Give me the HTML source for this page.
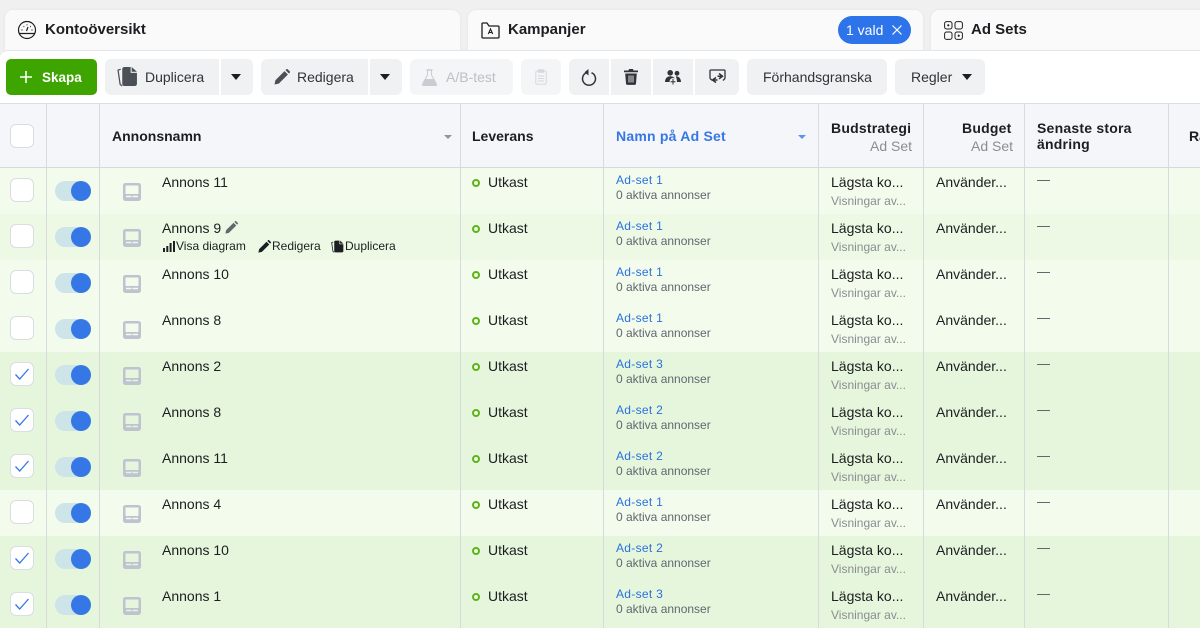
<!DOCTYPE html>
<html lang="sv"><head><meta charset="utf-8"><title>Annonser</title>
<style>
*{box-sizing:border-box}
html,body{margin:0;padding:0}
body{width:1200px;height:628px;overflow:hidden;position:relative;background:#f0f0f0;font-family:"Liberation Sans",Arial,sans-serif;color:#1c1e21;font-size:14px}
.a,.r>*,.tab,.btn{position:absolute}
.tab{top:10px;height:41px;background:#fafafa;border-radius:8px 8px 0 0;box-shadow:0 0 3px rgba(0,0,0,.06)}
.tt{position:absolute;top:11px;font-weight:700;font-size:15px;line-height:18px;color:#1c1e21;white-space:nowrap}
#bar{position:absolute;left:0;top:50px;width:1200px;height:54px;background:#fff;border-top:1px solid #e4e5e7;border-bottom:1px solid #dadde1;border-radius:8px 0 0 0}
.btn{top:59px;height:36px;background:#f0f1f2;border-radius:6px;line-height:36px;white-space:nowrap;color:#303338}
.btn span{position:absolute;top:0}
.lft{border-radius:6px 0 0 6px}.rgt{border-radius:0 6px 6px 0}.mid{border-radius:0}
.car{position:absolute;width:0;height:0;border-left:5.5px solid transparent;border-right:5.5px solid transparent;border-top:6.5px solid #1c1e21}
#head{position:absolute;left:0;top:104px;width:1200px;height:64px;background:#f5f6f9;border-bottom:1.5px solid #d6d8db}
.h{position:absolute;font-weight:700;font-size:14px;line-height:16px;white-space:nowrap;color:#1c1e21}
.ls{letter-spacing:.22px}
.sub{position:absolute;font-size:14px;line-height:16px;color:#8a8d91;white-space:nowrap}
.v{position:absolute;top:104px;width:1px;height:524px;background:#d8dadd;z-index:5}
.r{position:absolute;left:0;width:1200px;height:46px;background:#f3fbec}
.r.e{background:#edf9e5}.r.s{background:#e6f6dc}
.cb{left:10px;top:10px;width:24px;height:24px;background:#fff;border:1px solid #dadde1;border-radius:6px}
.cb svg{position:absolute;left:3px;top:3px}
.tr{left:55px;top:13px;width:34px;height:20px;border-radius:10px;background:#cde4e9}
.kn{left:71px;top:13px;width:20px;height:20px;border-radius:50%;background:#3578e5}
.ic{left:123px;top:15px}
.n{left:162px;top:6px;line-height:16px;white-space:nowrap}
.d{left:472px;top:11px;width:8px;height:8px;border-radius:50%;border:2.5px solid #5cb516;background:#f3fbec}
.u{left:488px;top:6px;line-height:16px}
.l{left:616px;top:4px;font-size:12px;line-height:16px;color:#2871e0;letter-spacing:.3px;white-space:nowrap}
.m{left:616px;top:19px;font-size:12px;line-height:16px;color:#606770;white-space:nowrap}
.b1{left:831px;top:6px;line-height:16px;white-space:nowrap}
.b2{left:831px;top:25px;font-size:12px;line-height:16px;color:#8a8d91;white-space:nowrap}
.p{left:936px;top:6px;line-height:16px;white-space:nowrap}
.dash{left:1037px;top:12px;width:13px;height:1px;background:#606770}
.act{font-size:12px;line-height:14px;top:25px;white-space:nowrap;color:#1c1e21}
</style></head><body>
<svg width="0" height="0" style="position:absolute">
<symbol id="ad" viewBox="0 0 18 18"><path fill-rule="evenodd" fill="#bec3cf" d="M2.500 0h13A2.500 2.500 0 0 1 18 2.500v13a2.500 2.500 0 0 1-2.500 2.500h-13A2.500 2.500 0 0 1 0 15.500v-13A2.500 2.500 0 0 1 2.500 0zM2.500 2.500V11h13V2.500zM3 12.700v1.600h5.500v-1.600zM9.500 12.700v1.600H15v-1.600z"/></symbol>
<symbol id="ck" viewBox="0 0 16 16"><path d="M1.500 8.500 5.700 13 14.500 3" fill="none" stroke="#3578e5" stroke-width="1.300"/></symbol>
<symbol id="pen" viewBox="0 0 16 16"><path d="M.5 15.500l.9-4.300L10.500 2.100l3.400 3.400-9.100 9.100zM11.500 1.100l.8-.8a1 1 0 0 1 1.400 0l2 2a1 1 0 0 1 0 1.400l-.8.800z" fill="currentColor"/></symbol>
<symbol id="dup" viewBox="0 0 20 20"><path d="M7 1h6v5.500h6V17a2 2 0 0 1-2 2H7a2 2 0 0 1-2-2V3a2 2 0 0 1 2-2zM14 1l5 4.500h-5z" fill="currentColor"/><path d="M3.500 3 1 4l2 13.500 2 1.500" fill="none" stroke="currentColor" stroke-width="1.200"/></symbol>
</svg>

<div class="tab" style="left:5px;width:455px">
<svg class="a" style="left:12px;top:10px" width="20" height="20" viewBox="0 0 20 20" fill="none" stroke="#1c1e21" stroke-width="1.200"><circle cx="10" cy="10" r="8.500"/><path d="M2.500 13.500h15M9.500 11l1.500-4"/><path d="M4.500 10h1M14.500 10h1M6.500 6.500h.8M10 4.500v.8M13.200 6.500h.8" stroke-width="1.300"/></svg>
<div class="tt" style="left:40px">Kontoöversikt</div></div>
<div class="tab" style="left:468px;width:455px">
<svg class="a" style="left:13px;top:12px" width="19" height="17" viewBox="0 0 19 17" fill="none" stroke="#1c1e21" stroke-width="1.300"><path d="M1 15V2a1 1 0 0 1 1-1h4l2 3h9a1 1 0 0 1 1 1v10a1 1 0 0 1-1 1H2a1 1 0 0 1-1-1z"/><path d="M7.300 12l2.200-5 2.200 5M8.200 10.500h2.600" stroke-width="1.100"/></svg>
<div class="tt" style="left:40px">Kampanjer</div>
<div class="a" style="left:370px;top:6px;width:73px;height:28px;border-radius:14px;background:#2d73ea;color:#fff;line-height:28px;padding-left:8px">1 vald
<svg class="a" style="left:54px;top:9px" width="10" height="10" viewBox="0 0 10 10"><path d="M.5.500l9 9M9.500.500l-9 9" stroke="#fff" stroke-width="1.200"/></svg></div></div>
<div class="tab" style="left:931px;width:269px;border-radius:8px 0 0 0">
<svg class="a" style="left:13px;top:11px" width="19" height="19" viewBox="0 0 19 19" fill="none" stroke="#1c1e21" stroke-width="1"><rect x=".6" y=".6" width="7.400" height="7.400" rx="2"/><rect x="11" y=".6" width="7.400" height="7.400" rx="2"/><rect x=".6" y="11" width="7.400" height="7.400" rx="2"/><rect x="11" y="11" width="7.400" height="7.400" rx="2"/><circle cx="4.300" cy="4.300" r=".6" fill="#1c1e21"/><circle cx="14.700" cy="14.700" r=".6" fill="#1c1e21"/></svg>
<div class="tt" style="left:40px">Ad Sets</div></div>

<div id="bar"></div>
<div class="btn" style="left:6px;width:91px;background:#3ea400;color:#fff;font-weight:700;font-size:13.500px;border-radius:5px">
<svg class="a" style="left:14px;top:12px" width="12" height="12" viewBox="0 0 12 12"><path d="M6 0v12M0 6h12" stroke="#fff" stroke-width="1.600"/></svg><span style="left:36px;top:1px">Skapa</span></div>
<div class="btn lft" style="left:105px;width:114px"><svg class="a" style="left:12px;top:7px;color:#4b4f56" width="21" height="21"><use href="#dup"/></svg><span style="left:40px">Duplicera</span></div>
<div class="btn rgt" style="left:221px;width:32px"><i class="car" style="left:10px;top:15px"></i></div>
<div class="btn lft" style="left:261px;width:107px"><svg class="a" style="left:13px;top:10px;color:#4b4f56" width="16" height="16"><use href="#pen"/></svg><span style="left:36px">Redigera</span></div>
<div class="btn rgt" style="left:370px;width:32px"><i class="car" style="left:10px;top:15px"></i></div>
<div class="btn" style="left:410px;width:103px;background:#f4f5f6;color:#bcc0c4"><svg class="a" style="left:12px;top:10px" width="15" height="17" viewBox="0 0 15 17"><path d="M5.500 1h4v5l5 9a1 1 0 0 1-1 1.500H1.500a1 1 0 0 1-1-1.500l5-9z" fill="none" stroke="#c9ccd1" stroke-width="1"/><path d="M3.500 10h8l3 6H.8z" fill="#c9ccd1"/><path d="M4.500 1h6" stroke="#c9ccd1" stroke-width="1.500"/></svg><span style="left:36px">A/B-test</span></div>
<div class="btn" style="left:521px;width:40px;background:#f4f5f6"><svg class="a" style="left:14px;top:10px" width="12" height="16" viewBox="0 0 12 16" fill="none" stroke="#d5d8dc"><rect x=".8" y="2" width="10.400" height="13.200" rx="1.500"/><rect x="3.500" y=".8" width="5" height="2.500" fill="#d5d8dc"/><path d="M3 7h6M3 9.500h6M3 12h6"/></svg></div>
<div class="btn lft" style="left:569px;width:40px"><svg class="a" style="left:12px;top:10px" width="16" height="17" viewBox="0 0 16 17" fill="none" stroke="#303338" stroke-width="1.500"><path d="M5.500 3.700a6.500 6.500 0 1 0 5 0"/><path d="M7.500 0v6.500L3.500 3.200z" fill="#303338" stroke="none"/></svg></div>
<div class="btn mid" style="left:611px;width:40px"><svg class="a" style="left:13px;top:10px" width="14" height="16" viewBox="0 0 14 16"><path d="M5 0h4l.5 1.500H14V3.300H0V1.500h4.500z M1.200 4.500h11.600L12 14.500a1.500 1.500 0 0 1-1.500 1.400h-7A1.500 1.500 0 0 1 2 14.500z" fill="#303338"/><path d="M5 6.500v7M7 6.500v7M9 6.500v7" stroke="#f0f1f2" stroke-width=".9"/></svg></div>
<div class="btn mid" style="left:653px;width:40px"><svg class="a" style="left:12px;top:11px" width="16" height="15" viewBox="0 0 16 15" fill="#303338"><circle cx="5.200" cy="2.800" r="2.800"/><circle cx="12" cy="3.300" r="2.400"/><path d="M0 12C0 8.500 2.300 6.300 5.300 6.300S11 8.500 11 12zM10.800 6.300c3 0 5.200 2.200 5.200 5.700h-4c0-2-.5-4-1.200-5.700z"/><circle cx="8" cy="11.500" r="3.500" fill="#f0f1f2"/><path d="M8 9v5.500M5.500 11.700h5" stroke="#303338" stroke-width="1"/></svg></div>
<div class="btn rgt" style="left:695px;width:44px"><svg class="a" style="left:14px;top:10px" width="17" height="16" viewBox="0 0 17 16" fill="none" stroke="#303338" stroke-width="1.300"><path d="M1 9.500V2a1 1 0 0 1 1-1h13a1 1 0 0 1 1 1v7.500M1 9.500l2.500 2M16 9.500l-2 2"/><path d="M7 8.500l-3.500 2.500L7 13.500M3.500 11H8.500M10 4.500l3.500 2.700-3.500 2.700M13.500 7.200H8.500" stroke-width="1.500"/></svg></div>
<div class="btn" style="left:747px;width:140px"><span style="left:16px">Förhandsgranska</span></div>
<div class="btn" style="left:895px;width:90px"><span style="left:16px">Regler</span><i class="car" style="left:67px;top:15px"></i></div>

<div id="head">
<div class="a cb" style="position:absolute;left:10px;top:20px;width:24px;height:24px;background:#fff;border:1px solid #dadde1;border-radius:6px"></div>
<div class="h" style="left:112px;top:24px">Annonsnamn</div>
<i class="a" style="left:444px;top:31px;border-left:4px solid transparent;border-right:4px solid transparent;border-top:4px solid #90949c"></i>
<div class="h" style="left:472px;top:24px">Leverans</div>
<div class="h ls" style="left:616px;top:24px;color:#3578e5">Namn på Ad Set</div>
<i class="a" style="left:798px;top:31px;border-left:4px solid transparent;border-right:4px solid transparent;border-top:4px solid #5b93ee"></i>
<div class="h ls" style="left:831px;top:16px">Budstrategi</div><div class="sub" style="left:870px;top:34px">Ad Set</div>
<div class="h ls" style="left:962px;top:16px">Budget</div><div class="sub" style="left:971px;top:34px">Ad Set</div>
<div class="h ls" style="left:1037px;top:16px">Senaste stora<br>ändring</div>
<div class="h" style="left:1189px;top:24px">Räckvidd</div>
</div>
<div class="v" style="left:46px"></div><div class="v" style="left:99px;"></div><div class="v" style="left:460px"></div><div class="v" style="left:603px"></div><div class="v" style="left:818px"></div><div class="v" style="left:923px"></div><div class="v" style="left:1024px"></div><div class="v" style="left:1168px"></div>

<div class="r" style="top:168px"><div class="cb"></div><div class="tr"></div><div class="kn"></div><svg class="ic" width="18" height="18"><use href="#ad"/></svg><div class="n">Annons 11</div><div class="d"></div><div class="u">Utkast</div><div class="l">Ad-set 1</div><div class="m">0 aktiva annonser</div><div class="b1">Lägsta ko...</div><div class="b2">Visningar av...</div><div class="p">Använder...</div><div class="dash"></div></div>
<div class="r e" style="top:214px"><div class="cb"></div><div class="tr"></div><div class="kn"></div><svg class="ic" width="18" height="18"><use href="#ad"/></svg><div class="n">Annons 9</div>
<svg style="left:225px;top:7px;color:#65676b" width="13" height="13"><use href="#pen"/></svg>
<svg style="left:163px;top:27px" width="12" height="11" viewBox="0 0 12 11" fill="#1c1e21"><rect x="0" y="7" width="2" height="4"/><rect x="3.300" y="5" width="2" height="6"/><rect x="6.600" y="2" width="2" height="9"/><rect x="10" y="0" width="2" height="11"/></svg><div class="act" style="left:176px">Visa diagram</div>
<svg style="left:258px;top:26px;color:#1c1e21" width="13" height="13"><use href="#pen"/></svg><div class="act" style="left:272px">Redigera</div>
<svg style="left:331px;top:26px;color:#1c1e21" width="13" height="13"><use href="#dup"/></svg><div class="act" style="left:345px">Duplicera</div>
<div class="d" style="background:#edf9e5"></div><div class="u">Utkast</div><div class="l">Ad-set 1</div><div class="m">0 aktiva annonser</div><div class="b1">Lägsta ko...</div><div class="b2">Visningar av...</div><div class="p">Använder...</div><div class="dash"></div></div>
<div class="r" style="top:260px"><div class="cb"></div><div class="tr"></div><div class="kn"></div><svg class="ic" width="18" height="18"><use href="#ad"/></svg><div class="n">Annons 10</div><div class="d"></div><div class="u">Utkast</div><div class="l">Ad-set 1</div><div class="m">0 aktiva annonser</div><div class="b1">Lägsta ko...</div><div class="b2">Visningar av...</div><div class="p">Använder...</div><div class="dash"></div></div>
<div class="r" style="top:306px"><div class="cb"></div><div class="tr"></div><div class="kn"></div><svg class="ic" width="18" height="18"><use href="#ad"/></svg><div class="n">Annons 8</div><div class="d"></div><div class="u">Utkast</div><div class="l">Ad-set 1</div><div class="m">0 aktiva annonser</div><div class="b1">Lägsta ko...</div><div class="b2">Visningar av...</div><div class="p">Använder...</div><div class="dash"></div></div>
<div class="r s" style="top:352px"><div class="cb"><svg width="16" height="16"><use href="#ck"/></svg></div><div class="tr"></div><div class="kn"></div><svg class="ic" width="18" height="18"><use href="#ad"/></svg><div class="n">Annons 2</div><div class="d"></div><div class="u">Utkast</div><div class="l">Ad-set 3</div><div class="m">0 aktiva annonser</div><div class="b1">Lägsta ko...</div><div class="b2">Visningar av...</div><div class="p">Använder...</div><div class="dash"></div></div>
<div class="r s" style="top:398px"><div class="cb"><svg width="16" height="16"><use href="#ck"/></svg></div><div class="tr"></div><div class="kn"></div><svg class="ic" width="18" height="18"><use href="#ad"/></svg><div class="n">Annons 8</div><div class="d"></div><div class="u">Utkast</div><div class="l">Ad-set 2</div><div class="m">0 aktiva annonser</div><div class="b1">Lägsta ko...</div><div class="b2">Visningar av...</div><div class="p">Använder...</div><div class="dash"></div></div>
<div class="r s" style="top:444px"><div class="cb"><svg width="16" height="16"><use href="#ck"/></svg></div><div class="tr"></div><div class="kn"></div><svg class="ic" width="18" height="18"><use href="#ad"/></svg><div class="n">Annons 11</div><div class="d"></div><div class="u">Utkast</div><div class="l">Ad-set 2</div><div class="m">0 aktiva annonser</div><div class="b1">Lägsta ko...</div><div class="b2">Visningar av...</div><div class="p">Använder...</div><div class="dash"></div></div>
<div class="r" style="top:490px"><div class="cb"></div><div class="tr"></div><div class="kn"></div><svg class="ic" width="18" height="18"><use href="#ad"/></svg><div class="n">Annons 4</div><div class="d"></div><div class="u">Utkast</div><div class="l">Ad-set 1</div><div class="m">0 aktiva annonser</div><div class="b1">Lägsta ko...</div><div class="b2">Visningar av...</div><div class="p">Använder...</div><div class="dash"></div></div>
<div class="r s" style="top:536px"><div class="cb"><svg width="16" height="16"><use href="#ck"/></svg></div><div class="tr"></div><div class="kn"></div><svg class="ic" width="18" height="18"><use href="#ad"/></svg><div class="n">Annons 10</div><div class="d"></div><div class="u">Utkast</div><div class="l">Ad-set 2</div><div class="m">0 aktiva annonser</div><div class="b1">Lägsta ko...</div><div class="b2">Visningar av...</div><div class="p">Använder...</div><div class="dash"></div></div>
<div class="r s" style="top:582px"><div class="cb"><svg width="16" height="16"><use href="#ck"/></svg></div><div class="tr"></div><div class="kn"></div><svg class="ic" width="18" height="18"><use href="#ad"/></svg><div class="n">Annons 1</div><div class="d"></div><div class="u">Utkast</div><div class="l">Ad-set 3</div><div class="m">0 aktiva annonser</div><div class="b1">Lägsta ko...</div><div class="b2">Visningar av...</div><div class="p">Använder...</div><div class="dash"></div></div>
</body></html>
